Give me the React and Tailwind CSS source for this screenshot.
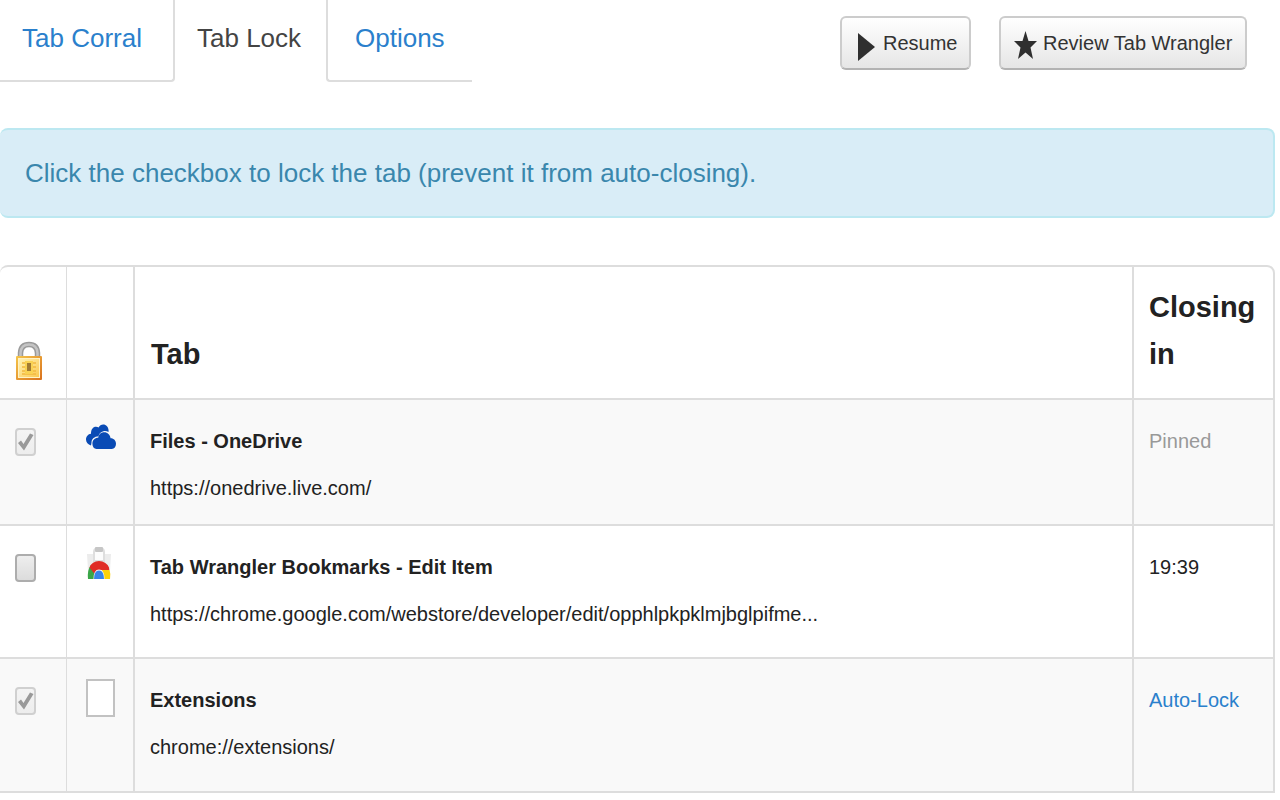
import { useState } from "react";

const OneDriveIcon = () => (
  <svg viewBox="0 0 30 26" className="w-[30px] h-[26px]" preserveAspectRatio="none">
    <path
      d="M5 21.500C2 20.500 0 18.500 0 15.500C0 12.500 2 10 5 9.700C5 5.500 7 2.800 10 2.800C11 2.800 12 3.100 12.600 3.600C13.600 1.500 15.200 0.500 17.200 0.500C20.200 0.500 22.400 3 22.600 6.500L22.500 8C21 7 19 6.700 17.400 7.200C14.800 7.800 13 9.800 12.500 12.300C8.500 12.500 5.500 15 5.500 18.500C5.400 19.500 5.200 20.600 5 21.500Z"
      fill="#0a4bb5"
    />
    <path
      d="M10.500 25C8 25 6.400 22.900 6.400 19.800C6.400 16.300 8.700 13.800 12.200 13.800C12.600 10.500 15 8.300 18.200 8.300C21.500 8.300 24 10.800 24.600 14.300C27.700 14.200 30 16.600 30 19.800C30 22.900 28.300 25 25.800 25Z"
      fill="#0a4bb5"
    />
  </svg>
);

const WebStoreIcon = () => (
  <svg viewBox="0 0 26 34" className="w-[26px] h-[34px]" preserveAspectRatio="none">
    <path d="M1 8H25L23.500 33H2.500Z" fill="#ececec" />
    <path d="M8 15V6Q8 2 13 2Q18 2 18 6V15Z" fill="#fcfcfc" stroke="#dedede" strokeWidth="2" />
    <rect x="9" y="1" width="8" height="5" rx="1" fill="#c6c6c6" />
    <path d="M2 33Q1 24 5 19L11 26L9.500 33Z" fill="#3aa648" />
    <path d="M3.500 21.500Q6 15 13 15Q20 15 23 21.500L23.300 24H13Q9.500 24 8.500 28Z" fill="#e02b25" />
    <path d="M16 24H23.500Q25 28 24 33H17Z" fill="#fcd20a" />
    <path d="M7.500 33Q7.500 23.500 13 23.500Q18.500 23.500 18.500 33Z" fill="#f5f5f5" />
    <path d="M8 33Q8 24.500 13 24.500Q18 24.500 18 33Z" fill="#3784e8" />
  </svg>
);

const BlankIcon = () => (
  <span className="block w-[29px] h-[38px] border-2 border-[#c2c2c2] bg-white" />
);

const LockIcon = () => (
  <svg viewBox="0 0 26 39" className="w-[26px] h-[39px]" role="img" aria-label="Locked">
    <defs>
      <linearGradient id="gold" x1="0" y1="0" x2="1" y2="1">
        <stop offset="0" stopColor="#f5c64a" />
        <stop offset="1" stopColor="#d9701c" />
      </linearGradient>
      <linearGradient id="face" x1="0" y1="0" x2="1" y2="1">
        <stop offset="0" stopColor="#fff3b5" />
        <stop offset="1" stopColor="#fbc850" />
      </linearGradient>
    </defs>
    <path d="M4.500 17V12Q5 3.500 13 3.500Q21 3.500 21.500 12V17" fill="none" stroke="#9a9a9a" strokeWidth="5.500" />
    <path d="M4.500 17V12Q5 3.500 13 3.500Q21 3.500 21.500 12V17" fill="none" stroke="#c4c4c4" strokeWidth="2.500" />
    <rect y="15" width="26" height="24" rx="1" fill="url(#gold)" />
    <rect x="2" y="17" width="22" height="20" fill="#fff2c4" />
    <rect x="3" y="18" width="20" height="18" fill="url(#face)" />
    <path d="M6 22H20M6 26H20M6 30H20M6 33H20" stroke="#f2b83e" strokeWidth="1.500" />
    <rect x="9" y="20" width="8" height="13" fill="#f9d253" />
    <rect x="11" y="22" width="4" height="8" fill="#a07a34" />
  </svg>
);

const rows = [
  {
    title: "Files - OneDrive",
    url: "https://onedrive.live.com/",
    closing: "Pinned",
    color: "text-[#999999]",
    locked: true,
    disabled: true,
    icon: <OneDriveIcon />,
    iconPad: "pt-6",
    height: "h-[126px]",
  },
  {
    title: "Tab Wrangler Bookmarks - Edit Item",
    url: "https://chrome.google.com/webstore/developer/edit/opphlpkpklmjbglpifme...",
    closing: "19:39",
    color: "text-[#222222]",
    locked: false,
    disabled: false,
    icon: <WebStoreIcon />,
    iconPad: "pt-5",
    height: "h-[133px]",
  },
  {
    title: "Extensions",
    url: "chrome://extensions/",
    closing: "Auto-Lock",
    color: "text-[#2a80cc]",
    locked: true,
    disabled: true,
    icon: <BlankIcon />,
    iconPad: "pt-5",
    height: "h-[134px]",
  },
];

const TabRow = ({ row }) => {
  const [locked, setLocked] = useState(row.locked);

  return (
    <tr className={`${row.height} align-top odd:bg-[#f9f9f9]`}>
      <td className="border-b-2 border-[#dddddd] pl-[15px] pt-[28px]">
        <span className="relative block w-[21px] h-[28px]">
          <input
            type="checkbox"
            aria-label={`Lock ${row.title}`}
            checked={locked}
            disabled={row.disabled}
            onChange={(e) => setLocked(e.target.checked)}
            className="block appearance-none w-full h-full rounded-sm border-2 border-[#adadad] bg-linear-to-b from-[#eeeeee] to-[#dcdcdc] disabled:border-[#d0d0d0] disabled:from-[#f4f4f4] disabled:to-[#ededed]"
          />
          {locked && (
            <svg viewBox="0 0 21 28" className="absolute inset-0 pointer-events-none">
              <path d="M3 15L6 12.500L8.500 16L15 5.500L18.500 7L9 22.500Z" fill="#999999" />
            </svg>
          )}
        </span>
      </td>
      <td className={`border-b-2 border-l border-[#dddddd] pl-[19px] ${row.iconPad}`}>{row.icon}</td>
      <td className="border-b-2 border-l-2 border-[#dddddd] px-[15px] pt-[18px]">
        <strong className="block font-bold">{row.title}</strong>
        <span className="block">{row.url}</span>
      </td>
      <td className={`border-b-2 border-x-2 border-[#dddddd] px-[15px] pt-[18px] ${row.color}`}>
        {row.closing}
      </td>
    </tr>
  );
};

const buttonClass =
  "flex items-center h-[54px] rounded-md border-2 border-[#cccccc] border-b-[#b3b3b3] bg-linear-to-b from-white to-[#e6e6e6] text-[20px] text-[#333333] whitespace-nowrap cursor-pointer";

const App = () => {
  return (
    <div className="min-h-screen bg-white pr-[5px] font-['Liberation_Sans',Arial,sans-serif] text-[#222222]">
      <header className="flex justify-between">
        <nav className="flex h-[82px] text-[26px] leading-[76px]">
          <a href="#corral" className="w-[175px] pl-[22px] border-b-2 border-r-2 border-[#dddddd] rounded-br-sm text-[#2a80cc]">
            Tab Corral
          </a>
          <a href="#lock" aria-current="page" className="w-[151px] pl-[22px] text-[#444444]">
            Tab Lock
          </a>
          <a href="#options" className="w-[146px] pl-[27px] border-b-2 border-l-2 border-[#dddddd] rounded-bl-sm text-[#2a80cc]">
            Options
          </a>
        </nav>
        <div className="flex gap-7 pt-4 pr-7">
          <button type="button" className={`${buttonClass} w-[131px] pl-4 gap-2`}>
            <svg viewBox="0 0 17 28" className="shrink-0 w-[17px] h-[28px] mt-2" preserveAspectRatio="none">
              <path d="M0 0L17 14L0 28Z" fill="#2f2f2f" />
            </svg>
            Resume
          </button>
          <button type="button" className={`${buttonClass} w-[248px] pl-[13px] gap-1.5`}>
            <svg viewBox="0 0 23 28" className="shrink-0 w-[23px] h-[28px] mt-1" preserveAspectRatio="none">
              <path
                d="M11.500 0L14.500 10H23L16.500 16.500L19 28L11.500 21.500L4 28L6.500 16.500L0 10H8.500Z"
                fill="#2f2f2f"
              />
            </svg>
            Review Tab Wrangler
          </button>
        </div>
      </header>

      <p className="mt-[46px] h-[90px] pl-[25px] rounded-lg border-y-2 border-r-2 border-[#bce8f1] bg-[#d9edf7] text-[26px] leading-[86px] text-[#3a87ad]">
        Click the checkbox to lock the tab (prevent it from auto-closing).
      </p>

      <table className="mt-[47px] w-full table-fixed border-separate border-spacing-0 text-left text-[20px] leading-[47px]">
        <colgroup>
          <col className="w-[66px]" />
          <col className="w-[67px]" />
          <col />
          <col className="w-[143px]" />
        </colgroup>
        <thead>
          <tr className="h-[135px] align-bottom text-[29px] leading-[47px]">
            <th className="border-y-2 border-[#dddddd] rounded-tl-lg pl-4 pb-[18px]">
              <LockIcon />
            </th>
            <th className="border-y-2 border-l border-[#dddddd]" aria-label="Icon"></th>
            <th className="border-y-2 border-l-2 border-[#dddddd] px-4 pb-[20px]">Tab</th>
            <th className="border-2 border-[#dddddd] rounded-tr-lg pl-[15px] pb-[20px]">Closing in</th>
          </tr>
        </thead>
        <tbody>
          {rows.map((row) => (
            <TabRow key={row.url} row={row} />
          ))}
        </tbody>
      </table>
    </div>
  );
};

export default App;
